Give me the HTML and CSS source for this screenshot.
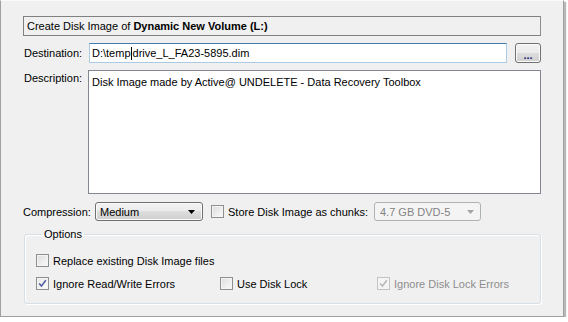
FILE: index.html
```html
<!DOCTYPE html>
<html lang="en">
<head>
  <meta charset="UTF-8" />
  <title>Create Disk Image</title>
  <link rel="stylesheet" href="styles.css">
</head>
<body>

  <div class="dialog">
    <div class="title">Create Disk Image of <b>Dynamic New Volume (L:)</b></div>

    <!-- Destination -->
    <div class="row dest-row">
      <span class="label">Destination:</span>
      <div class="input">D:\temp<span class="caret"></span>drive_L_FA23-5895.dim</div>
      <button class="browse">...</button>
    </div>

    <!-- Description -->
    <div class="row desc-row">
      <span class="label">Description:</span>
      <div class="textarea">Disk Image made by Active@ UNDELETE - Data Recovery Toolbox</div>
    </div>

    <!-- Compression / chunks -->
    <div class="row comp-row">
      <span class="comp-label">Compression:</span>
      <div class="combo">
        <span>Medium</span>
        <svg class="arrow" width="7" height="4" viewBox="0 0 7 4"><path d="M0 0h7L3.5 4z" fill="#000"/></svg>
      </div>
      <label class="check chunks">
        <span class="box"></span>
        <span>Store Disk Image as chunks:</span>
      </label>
      <div class="combo disabled">
        <span>4.7 GB DVD-5</span>
        <svg class="arrow" width="7" height="4" viewBox="0 0 7 4"><path d="M0 0h7L3.5 4z" fill="#a3a3a3"/></svg>
      </div>
    </div>

    <!-- Options -->
    <fieldset class="options">
      <legend>Options</legend>
      <label class="check">
        <span class="box"></span>
        <span>Replace existing Disk Image files</span>
      </label>
      <div class="opt-row">
        <label class="check opt-a">
          <span class="box checked">
            <svg width="9" height="9" viewBox="0 0 9 9"><path d="M1.2 4.6l2.2 2.5L7.8 1.2" fill="none" stroke="#4a5a9c" stroke-width="1.5"/></svg>
          </span>
          <span>Ignore Read/Write Errors</span>
        </label>
        <label class="check opt-b">
          <span class="box"></span>
          <span>Use Disk Lock</span>
        </label>
        <label class="check disabled">
          <span class="box checked">
            <svg width="9" height="9" viewBox="0 0 9 9"><path d="M1.2 4.6l2.2 2.5L7.8 1.2" fill="none" stroke="#b5b5b5" stroke-width="1.5"/></svg>
          </span>
          <span>Ignore Disk Lock Errors</span>
        </label>
      </div>
    </fieldset>
  </div>

</body>
</html>
```

FILE: styles.css
```css
* {
  box-sizing: border-box;
  margin: 0;
  padding: 0;
}

body {
  font-family: 'Liberation Sans', Arial, sans-serif;
  font-size: 11px;
  color: #000;
  background: #fff;
}

.dialog {
  width: 564px;
  height: 317px;
  background: #f0f0f0;
  border: 1px solid #a0a0a0;
  border-top-color: #fbfbfb;
  box-shadow: 2px 2px 1px rgba(0, 0, 0, 0.28);
  padding: 15px 0 0 22px;
}

.title {
  width: 518px;
  height: 20px;
  border: 1px solid #808080;
  border-right-color: #8e8e8e;
  line-height: 18px;
  padding-left: 3px;
}

.title b {
  font-weight: bold;
}

.row {
  display: flex;
}

.label {
  width: 66px;
  padding-left: 1px;
}

/* Destination */
.dest-row {
  margin-top: 7px;
  align-items: center;
}

.input {
  width: 418px;
  height: 20px;
  background: #fff;
  border: 1px solid #abcbe4;
  border-top-color: #3f7db0;
  line-height: 18px;
  padding-left: 2px;
  white-space: nowrap;
}

.caret {
  display: inline-block;
  width: 1px;
  height: 13px;
  background: #000;
  vertical-align: -3px;
  margin-right: 1px;
}

.browse {
  width: 26px;
  height: 20px;
  margin-left: 8px;
  border: 1px solid #707070;
  border-radius: 3px;
  background: linear-gradient(#f2f2f2 0%, #ebebeb 50%, #dddddd 50%, #cfcfcf 100%);
  box-shadow: inset 0 0 0 1px #fcfcfc;
  color: #1c1c74;
  font-family: inherit;
  font-size: 11px;
  font-weight: bold;
  line-height: 12px;
  padding-top: 4px;
}

/* Description */
.desc-row {
  margin-top: 7px;
}

.desc-row .label {
  padding-top: 2px;
}

.textarea {
  width: 453px;
  height: 124px;
  margin-left: -1px;
  background: #fff;
  border: 1px solid #828790;
  padding: 5px 3px;
  line-height: 13px;
}

/* Compression */
.comp-row {
  margin-top: 8px;
  align-items: center;
  height: 19px;
}

.comp-label {
  width: 72px;
}

.combo {
  width: 108px;
  height: 19px;
  border: 1px solid #707070;
  border-radius: 3px;
  background: linear-gradient(#f2f2f2 0%, #ebebeb 50%, #dddddd 50%, #cfcfcf 100%);
  box-shadow: inset 0 0 0 1px #fbfbfb;
  display: flex;
  align-items: center;
  justify-content: space-between;
  padding: 0 7px 0 4px;
}

.combo.disabled {
  width: 107px;
  border-color: #adb2b5;
  background: #f4f4f4;
  box-shadow: none;
  color: #838383;
  padding-left: 5px;
  padding-right: 6px;
}

.check {
  display: flex;
  align-items: center;
  gap: 4px;
  white-space: nowrap;
}

.box {
  width: 13px;
  height: 13px;
  border: 1px solid #8e8f8f;
  background: linear-gradient(135deg, #dcdcdc, #fbfbfb);
  box-shadow: inset 0 0 0 1px #f4f4f4;
  display: flex;
  align-items: center;
  justify-content: center;
}

.box.checked {
  background: linear-gradient(135deg, #e6e6e6, #fdfdfd);
}

.chunks {
  margin-left: 8px;
  width: 163px;
}

.check.disabled {
  color: #8d8d8d;
}

.check.disabled .box {
  border-color: #c4c4c4;
  background: #f4f4f4;
}

/* Options group */
.options {
  width: 517px;
  height: 76px;
  margin: 7px 0 0 1px;
  border: 1px solid #d5dfe5;
  border-radius: 3px;
  box-shadow: 1px 1px 0 #fff inset, 1px 1px 0 #fff;
  padding: 13px 0 0 11px;
}

.options legend {
  margin-left: 6px;
  padding: 0 2px;
  line-height: 13px;
}

.opt-row {
  display: flex;
  margin-top: 10px;
}

.opt-a {
  width: 184px;
}

.opt-b {
  width: 157px;
}
```
